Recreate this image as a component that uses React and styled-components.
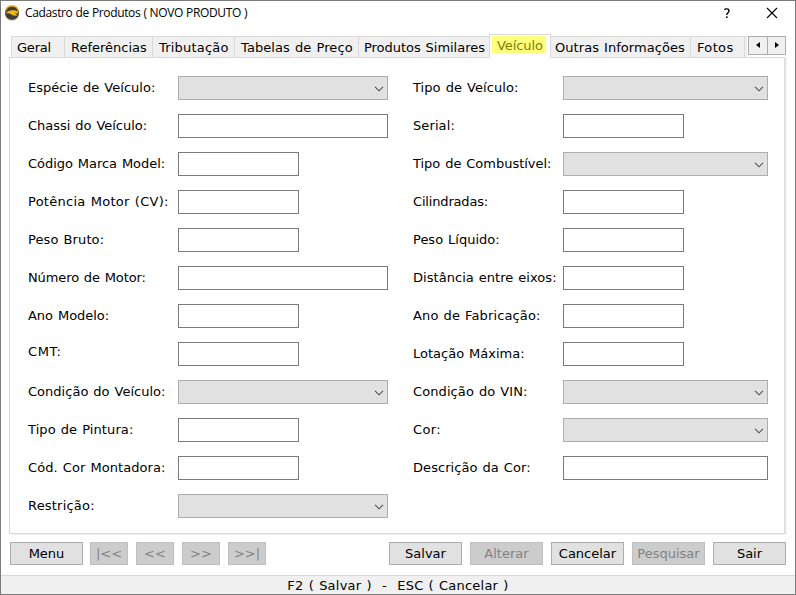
import React from "react";
import styled, { createGlobalStyle } from "styled-components";

const GlobalStyle = createGlobalStyle`
  * { box-sizing: border-box; }
  html, body { margin: 0; padding: 0; background: #fff; overflow: hidden; }
`;

const Window = styled.div`
  width: 796px;
  height: 595px;
  display: flex;
  flex-direction: column;
  background: #fff;
  border: 1px solid #7a7a7a;
  color: #000;
  font: 13px/16px Verdana, "DejaVu Sans", sans-serif;
  word-spacing: 0.8px;
  white-space: pre;
`;

const TitleBar = styled.header`
  height: 33px;
  flex: none;
  display: flex;
  align-items: flex-start;
  padding: 4px 17px 0 3px;
`;

const Title = styled.h1`
  margin: 0 auto 0 5px;
  font: 400 12px/16px "Segoe UI", "Open Sans", sans-serif;
  letter-spacing: -0.36px;
  word-spacing: 0.3px;
`;

const TitleIcon = styled.svg`
  display: block;
  flex: none;
  margin-left: ${(p) => p.$gap || 0}px;
`;

const TabStrip = styled.nav`
  height: 23px;
  flex: none;
  display: flex;
  align-items: flex-end;
  padding-left: 10px;
`;

const Tab = styled.div`
  width: ${(p) => p.$w}px;
  height: 21px;
  flex: none;
  overflow: hidden;
  padding: 3px 0 0 ${(p) => p.$pad ?? 6}px;
  background: #f0f0f0;
  border: solid #d9d9d9;
  border-width: 1px 0 0 1px;
  letter-spacing: ${(p) => p.$ls || 0}px;
`;

const ActiveTab = styled.div`
  position: relative;
  z-index: 1;
  width: 62px;
  height: 24px;
  flex: none;
  margin: 0 -1px -1px 0;
  padding: 1px 2px;
  background: #fff;
  border: solid #d9d9d9;
  border-width: 1px 1px 0;
`;

const Highlight = styled.div`
  height: 17px;
  width: 54px;
  padding-left: 5px;
  line-height: 19px;
  background: #ffff7e;
  color: #7d7d00;
  letter-spacing: -0.1px;
`;

const TabScroller = styled.div`
  display: flex;
  align-self: flex-start;
  margin: 2px 0 0 1px;
`;

const ScrollButton = styled.button`
  width: 20px;
  height: 19px;
  padding: 0 0 1px;
  display: flex;
  align-items: center;
  justify-content: center;
  background: #f0f0f0;
  border: 1px solid #acacac;
  & + & { width: 19px; margin-left: -1px; }
`;

const Panel = styled.main`
  width: 776px;
  height: 477px;
  flex: none;
  margin-left: 8px;
  display: grid;
  grid-template-columns: 385px 1fr;
  padding: 18px 0 0 18px;
  border: 1px solid #d9d9d9;
  box-shadow: 2px 1px 0 #f0f0f0;
`;

const Column = styled.div`
  display: flex;
  flex-direction: column;
  gap: 14px;
`;

const Row = styled.div`
  height: 24px;
  display: flex;
`;

const Label = styled.label`
  width: 150px;
  flex: none;
  padding-top: ${(p) => 4 - (p.$raise || 0)}px;
  letter-spacing: ${(p) => p.$ls || 0}px;
`;

const Input = styled.input`
  width: ${(p) => p.$w}px;
  height: 24px;
  padding: 0 4px;
  background: #fff;
  border: 1px solid #7a7a7a;
  border-radius: 0;
  outline: 0;
`;

const Combo = styled.div`
  width: ${(p) => p.$w}px;
  height: 24px;
  display: flex;
  align-items: center;
  justify-content: flex-end;
  padding: 2px 3px 0 0;
  background: #e1e1e1;
  border: 1px solid #adadad;
`;

const ButtonBar = styled.div`
  display: flex;
  flex: none;
  gap: 8px;
  height: 23px;
  margin: 8px 9px 10px;
`;

const Button = styled.button`
  width: ${(p) => (p.$small ? 38 : 73)}px;
  height: 23px;
  flex: none;
  padding: 0;
  margin-left: ${(p) => (p.$push ? "auto" : p.$nudge || 0)};
  font: inherit;
  white-space: pre;
  letter-spacing: ${(p) => p.$ls || 0}px;
  color: #000;
  background: #e1e1e1;
  border: 1px solid #adadad;
  &:disabled {
    color: #838383;
    background: #ccc;
    border-color: #bfbfbf;
  }
`;

const StatusBar = styled.footer`
  flex: 1;
  padding-top: 2px;
  text-align: center;
  background: #f0f0f0;
  border-top: 1px solid #d7d7d7;
  letter-spacing: 0.22px;
`;

const AppLogo = () => (
  <TitleIcon width="16" height="16" viewBox="0 0 16 16">
    <circle cx="8" cy="8" r="7" fill="#3b3d40" />
    <path d="M1.6 6 A6.6 6.6 0 0 1 14.4 6" fill="none" stroke="#e0a818" strokeWidth="1.3" />
    <path d="M1.6 10 A6.6 6.6 0 0 0 14.4 10" fill="none" stroke="#a88324" strokeWidth=".8" />
    <path d="M1.5 8.6 C4 5.2 8 4.8 11.5 5.6 C13.5 6 14.3 7 14 8.4 L10.5 8.2 L13.6 10.2 C11.5 11.2 8.5 10.6 7 9 C5 8 3 8.2 1.5 8.6Z" fill="#f5b914" />
  </TitleIcon>
);

const Chevron = () => (
  <svg width="10" height="6" viewBox="0 0 10 6">
    <path d="M1 .8 L5 4.8 L9 .8" fill="none" stroke="#505050" strokeWidth="1.1" />
  </svg>
);

const left = [
  { label: "Espécie de Veículo:", combo: true, w: 210, ls: 0.02 },
  { label: "Chassi do Veículo:", w: 210, ls: -0.01 },
  { label: "Código Marca Model:", w: 121, ls: -0.03 },
  { label: "Potência Motor (CV):", w: 121, ls: 0.27 },
  { label: "Peso Bruto:", w: 121, ls: 0.11 },
  { label: "Número de Motor:", w: 210, ls: -0.1 },
  { label: "Ano Modelo:", w: 121, ls: -0.02 },
  { label: "CMT:", w: 121, raise: 2, ls: 0.6 },
  { label: "Condição do Veículo:", combo: true, w: 210, ls: 0.02 },
  { label: "Tipo de Pintura:", w: 121, ls: 0.09 },
  { label: "Cód. Cor Montadora:", w: 121, ls: 0.08 },
  { label: "Restrição:", combo: true, w: 210, ls: 0.2 },
];

const right = [
  { label: "Tipo de Veículo:", combo: true, w: 205, ls: 0.07 },
  { label: "Serial:", w: 121, ls: 0.1 },
  { label: "Tipo de Combustível:", combo: true, w: 205, ls: -0.02 },
  { label: "Cilindradas:", w: 121, ls: -0.17 },
  { label: "Peso Líquido:", w: 121, ls: 0 },
  { label: "Distância entre eixos:", w: 121, ls: 0.04 },
  { label: "Ano de Fabricação:", w: 121, ls: 0.13 },
  { label: "Lotação Máxima:", w: 121, ls: 0 },
  { label: "Condição do VIN:", combo: true, w: 205, ls: 0.09 },
  { label: "Cor:", combo: true, w: 205, ls: 0.4 },
  { label: "Descrição da Cor:", w: 205, ls: 0.06 },
];

const Fields = ({ items }) => (
  <Column>
    {items.map((f) => (
      <Row key={f.label}>
        <Label $ls={f.ls} $raise={f.raise}>{f.label}</Label>
        {f.combo ? <Combo $w={f.w}><Chevron /></Combo> : <Input $w={f.w} />}
      </Row>
    ))}
  </Column>
);

export default function App() {
  return (
    <Window>
      <GlobalStyle />
      <TitleBar>
        <AppLogo />
        <Title>Cadastro de Produtos ( NOVO PRODUTO )</Title>
        <TitleIcon width="8" height="16" viewBox="0 0 8 16">
          <path d="M1.4 4.8 C2 3.6 6 3.2 6 5.8 C6 7.8 3.8 7.8 3.8 10" fill="none" stroke="#000" strokeWidth="1.4" />
          <rect x="3" y="11.4" width="1.6" height="1.6" fill="#000" />
        </TitleIcon>
        <TitleIcon $gap={35} width="12" height="16" viewBox="0 0 12 16">
          <path d="M1 3 L11 13 M11 3 L1 13" stroke="#000" strokeWidth="1.1" />
        </TitleIcon>
      </TitleBar>
      <TabStrip>
        <Tab $w={53} $pad={5} $ls={-0.2}>Geral</Tab>
        <Tab $w={88}>Referências</Tab>
        <Tab $w={82} $ls={0.2}>Tributação</Tab>
        <Tab $w={124} $ls={0.09}>Tabelas de Preço</Tab>
        <Tab $w={131} $pad={5} $ls={-0.03}>Produtos Similares</Tab>
        <ActiveTab><Highlight>Veículo</Highlight></ActiveTab>
        <Tab $w={140} $pad={4} $ls={0.06}>Outras Informações</Tab>
        <Tab $w={54} $ls={0.35}>Fotos</Tab>
        <Tab $w={3} $pad={0} />
        <TabScroller>
          <ScrollButton><svg width="4" height="6"><path d="M4 0V6L0 3Z" /></svg></ScrollButton>
          <ScrollButton><svg width="4" height="6"><path d="M0 0V6L4 3Z" /></svg></ScrollButton>
        </TabScroller>
      </TabStrip>
      <Panel>
        <Fields items={left} />
        <Fields items={right} />
      </Panel>
      <ButtonBar>
        <Button>Menu</Button>
        <Button $small disabled $nudge="-1px">|&lt;&lt;</Button>
        <Button $small disabled>&lt;&lt;</Button>
        <Button $small disabled>&gt;&gt;</Button>
        <Button $small disabled>&gt;&gt;|</Button>
        <Button $push>Salvar</Button>
        <Button disabled>Alterar</Button>
        <Button>Cancelar</Button>
        <Button disabled>Pesquisar</Button>
        <Button>Sair</Button>
      </ButtonBar>
      <StatusBar>F2 ( Salvar )  -  ESC ( Cancelar )</StatusBar>
    </Window>
  );
}
